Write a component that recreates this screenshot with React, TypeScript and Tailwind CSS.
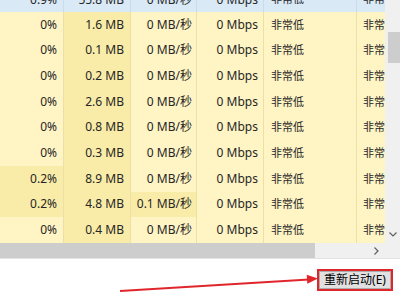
import React from "react";

const L = "bg-[#fff4c4]";
const D = "bg-[#f9eca8]";

type Row = { cpu: string; mem: string; disk: string; net: string; cpuDark?: boolean; diskDark?: boolean };

const rows: Row[] = [
  { cpu: "0%", mem: "1.6 MB", disk: "0 MB/秒", net: "0 Mbps" },
  { cpu: "0%", mem: "0.1 MB", disk: "0 MB/秒", net: "0 Mbps" },
  { cpu: "0%", mem: "0.2 MB", disk: "0 MB/秒", net: "0 Mbps" },
  { cpu: "0%", mem: "2.6 MB", disk: "0 MB/秒", net: "0 Mbps" },
  { cpu: "0%", mem: "0.8 MB", disk: "0 MB/秒", net: "0 Mbps" },
  { cpu: "0%", mem: "0.3 MB", disk: "0 MB/秒", net: "0 Mbps" },
  { cpu: "0.2%", mem: "8.9 MB", disk: "0 MB/秒", net: "0 Mbps", cpuDark: true },
  { cpu: "0.2%", mem: "4.8 MB", disk: "0.1 MB/秒", net: "0 Mbps", cpuDark: true, diskDark: true },
  { cpu: "0%", mem: "0.4 MB", disk: "0 MB/秒", net: "0 Mbps" },
];

function Cells({ r, blue }: { r: Row; blue?: boolean }) {
  const line = blue ? "border-[#c9dcec]" : "border-[#ece0a6]";
  const c1 = blue ? "" : r.cpuDark ? D : L;
  const c2 = blue ? "" : D;
  const c3 = blue ? "" : r.diskDark ? D : L;
  const c4 = blue ? "" : L;
  return (
    <>
      <div className={`w-[64px] shrink-0 border-r ${line} ${c1} flex items-center justify-end pr-[6px]`}>{r.cpu}</div>
      <div className={`w-[67px] shrink-0 border-r ${line} ${c2} flex items-center justify-end pr-[6px]`}>{r.mem}</div>
      <div className={`w-[66px] shrink-0 border-r ${line} ${c3} flex items-center justify-end pr-[4px]`}>{r.disk}</div>
      <div className={`w-[67px] shrink-0 border-r ${line} ${c4} flex items-center justify-end pr-[5px]`}>{r.net}</div>
      <div className={`w-[93px] shrink-0 border-r ${line} ${c4} flex items-center pl-[7px] text-[11px]`}>非常低</div>
      <div className={`w-[28px] shrink-0 ${c4} flex items-center pl-[6px] overflow-hidden whitespace-nowrap text-[11px]`}>非常低</div>
    </>
  );
}

export default function App() {
  return (
    <div
      className="relative w-[400px] h-[300px] overflow-hidden bg-white text-[12px] text-[#262626]"
      style={{ fontFamily: '"Noto Sans", "Noto Sans CJK SC", sans-serif' }}
    >
      <div className="flex h-[243px]">
        <div className="w-[385px] flex flex-col overflow-hidden">
          <div className="h-[12px] overflow-hidden shrink-0">
            <div className="h-[25px] -mt-[13px] flex bg-[#d9e9f6]">
              <Cells r={{ cpu: "0.9%", mem: "55.8 MB", disk: "0 MB/秒", net: "0 Mbps" }} blue />
            </div>
          </div>
          {rows.map((r, i) => (
            <div key={i} className="h-[25.67px] shrink-0 flex">
              <Cells r={r} />
            </div>
          ))}
        </div>
        <div className="w-[15px] bg-[#f0f0f0] flex flex-col">
          <div className="h-[32px] shrink-0" />
          <div className="h-[31px] ml-[3px] bg-[#cdcdcd] shrink-0" />
          <div className="flex-1" />
          <div className="h-[16px] flex items-center justify-center pb-[1px]">
            <svg width="8" height="5" viewBox="0 0 8 5">
              <path d="M0.5 0.5 L4 4 L7.5 0.5" fill="none" stroke="#606060" strokeWidth="1.2" />
            </svg>
          </div>
        </div>
      </div>
      <div className="h-[15px] flex bg-[#f0f0f0]">
        <div className="w-[315px] bg-[#cdcdcd]" />
        <div className="flex-1" />
        <div className="w-[17px] flex items-center justify-center">
          <svg width="5" height="8" viewBox="0 0 5 8">
            <path d="M0.5 0.5 L4 4 L0.5 7.5" fill="none" stroke="#606060" strokeWidth="1.2" />
          </svg>
        </div>
        <div className="w-[15px]" />
      </div>
      <div className="h-[1px] bg-[#e3e3e3]" />
      <div className="flex justify-end pt-[10px] pr-[7px]">
        <div className="w-[76px] h-[22px] border-2 border-[#e0262b] flex">
          <div className="flex-1 border border-[#adadad] bg-[#e1e1e1] flex items-center justify-center text-black whitespace-nowrap">
            重新启动(E)
          </div>
        </div>
      </div>
      <svg className="absolute left-0 top-0 pointer-events-none" width="400" height="300">
        <line x1="120" y1="291" x2="309" y2="279.5" stroke="#e0262b" strokeWidth="2" />
        <polygon points="318,278.5 307.3,283.7 306.7,274.7" fill="#e0262b" />
      </svg>
    </div>
  );
}
